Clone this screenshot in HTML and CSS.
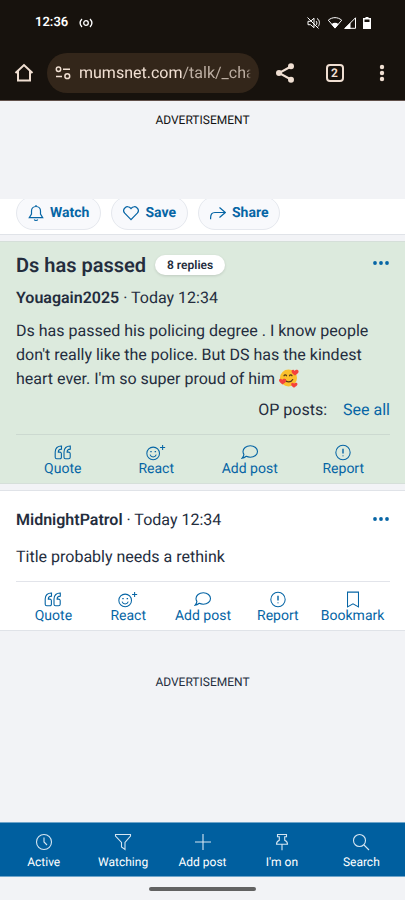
FILE: index.html
```html
<!DOCTYPE html>
<html lang="en">
<head>
<meta charset="utf-8">
<meta name="viewport" content="width=device-width, initial-scale=1">
<title>Ds has passed | Mumsnet</title>
<link rel="stylesheet" href="styles.css">
</head>
<body>
<svg class="sprite" aria-hidden="true">
  <symbol id="quote" viewBox="0 0 18 16"><path d="M7.500 1.500C3.800 1.400 1.200 3.600 1.200 7.500v5.200c0 1 .6 1.600 1.600 1.600h3c1 0 1.600-.6 1.600-1.600V9.200c0-1-.6-1.600-1.600-1.600H4.300c0-2 1.200-3 3.200-3zM16.300 1.500c-3.700-.1-6.300 2.100-6.300 6v5.200c0 1 .6 1.600 1.600 1.600h3c1 0 1.600-.6 1.600-1.600V9.200c0-1-.6-1.600-1.600-1.600h-1.500c0-2 1.200-3 3.200-3z"/></symbol>
  <symbol id="react" viewBox="0 0 22 18"><circle cx="8" cy="10" r="6.700"/><path d="M4.700 11.300c1.200 3.200 5.400 3.200 6.600 0M18 1v5.400M15.300 3.700h5.400"/><path class="dot" d="M5.700 7.500v1.200M10.300 7.500v1.200"/></symbol>
  <symbol id="comment" viewBox="0 0 18 16"><path d="M9.300 1.300c4.200 0 7.200 2.500 7.200 5.700s-3 5.700-7.200 5.700c-1.500 0-2.900-.3-4-.9-1.100.9-2.400 1.900-4.300 2 .9-1 1.800-2.300 1.900-3.900C2.300 9 2 8 2 7c0-3.200 3.100-5.700 7.300-5.700z"/></symbol>
  <symbol id="report" viewBox="0 0 18 18"><circle cx="9" cy="9" r="7.600"/><path class="dot" d="M9 5v5M9 12.300v.7"/></symbol>
  <symbol id="bookmark" viewBox="0 0 18 18"><path d="M3.200 1.200h11.600v15.600L9 13.500l-5.800 3.300z"/></symbol>
  <symbol id="dots" viewBox="0 0 18 6"><circle cx="3" cy="3" r="1.900"/><circle cx="9" cy="3" r="1.900"/><circle cx="15" cy="3" r="1.900"/></symbol>
</svg>

<header class="chrome">
  <div class="status">
    <span class="clock">12:36</span>
    <svg class="line cast" viewBox="0 0 14 12"><circle cx="7" cy="6" r="2.300"/><path d="M3 2C.6 4.500.6 7.500 3 10M11 2c2.400 2.500 2.400 5.500 0 8"/></svg>
    <svg class="signals" viewBox="0 0 66 14">
      <path class="stroke" d="M2 5.300h2.500L8 2.200v9.500L4.500 8.700H2zM10 5c1.200 1 1.200 3 0 4M11 2.500c3 1.500 3 6 1 8M1.500 1.500l11 11"/>
      <path class="stroke" d="M22.300 4.200c4-3.400 9.400-3.400 13.400 0L29 12z"/><path d="M25.500 8.200c2-1.800 5-1.800 7 0L29 12.500z"/>
      <path class="stroke" d="M39 12.300L49.500 1.800v10.500z"/><path d="M38 12.900l6.500-6.500v6.500z"/>
      <path d="M59.500 1h3v1H65v11h-8V2h2.500zM58.500 3.500V6h5V3.500z" fill-rule="evenodd"/>
    </svg>
  </div>
  <div class="toolbar">
    <button class="tool" aria-label="Home"><svg class="line" width="20" height="20" viewBox="0 0 20 20"><path d="M1.500 10L10 2l8.500 8M4 8v9.500h12V8"/></svg></button>
    <button class="address" aria-label="Address bar">
      <svg class="line" width="16" height="14" viewBox="0 0 16 14"><circle cx="3.500" cy="3.300" r="2.200"/><path d="M8 3.300h7M1 10.500h6"/><circle cx="12.300" cy="10.200" r="2.400"/></svg>
      <span class="url">mumsnet.com<span class="path">/talk/_chat</span></span>
    </button>
    <button class="tool share" aria-label="Share page"><svg width="20" height="20" viewBox="0 0 20 20"><path class="stroke" d="M16 3.500L4 10l12 6.500"/><circle cx="16" cy="3.300" r="3"/><circle cx="4" cy="10" r="3"/><circle cx="16" cy="16.700" r="3"/></svg></button>
    <button class="tool" aria-label="Tabs"><span class="tabs">2</span></button>
    <button class="tool" aria-label="Menu"><svg width="6" height="18" viewBox="0 0 6 18"><circle cx="3" cy="3" r="2.200"/><circle cx="3" cy="9" r="2.200"/><circle cx="3" cy="15" r="2.200"/></svg></button>
  </div>
</header>

<aside class="advert advert-top">ADVERTISEMENT</aside>

<main>
  <div class="thread-tools">
    <button class="pill"><svg class="icon" viewBox="0 0 16 18"><path d="M8 2.500C5 2.500 3.500 4.500 3.500 7v3L1.300 13.700h13.400L12.500 10V7c0-2.500-1.500-4.500-4.500-4.500zM8 1v1.500M6.300 15.500c.4 1.300 3 1.300 3.400 0"/></svg>Watch</button>
    <button class="pill"><svg class="icon" viewBox="1 0 16 18"><path d="M9 15.700L2.700 9.200C-.4 5.500 4.800-.2 9 4.500c4.200-4.700 9.400 1 6.300 4.700z"/></svg>Save</button>
    <button class="pill"><svg class="icon" viewBox="1 0 16 18"><path d="M1.600 15.200C1.400 10 3 8.500 6 8.500h10.300M10.500 3.500l5.800 5-5.800 5"/></svg>Share</button>
  </div>

  <article class="post op">
    <header class="row">
      <h1>Ds has passed</h1>
      <span class="replies">8 replies</span>
      <button class="more" aria-label="Post options"><svg><use href="#dots"/></svg></button>
    </header>
    <p class="byline"><b>Youagain2025</b> · Today 12:34</p>
    <p class="text">Ds has passed his policing degree . I know people don't really like the police. But DS has the kindest heart ever. I'm so super proud of him
      <svg class="emoji" role="img" aria-label="Smiling face with hearts" viewBox="0 0 20 20"><circle cx="9.500" cy="10" r="8.500" fill="#fbc02d"/><g fill="none" stroke="#573a18" stroke-linecap="round" stroke-width="1.200"><path d="M5 7.800c.5-1.300 2-1.300 2.500 0M10.500 7.800c.5-1.300 2-1.300 2.500 0M5.700 11.500c1.500 3.200 6.500 3.200 8 0"/></g><g fill="#f4423c"><path d="M16 7.500c-2-1.500-4-3-3.400-4.800.6-1.500 2.500-1.300 3 .2 1-1.700 3.700-1.700 4 .3.200 1.800-1.700 3-3.600 4.300z"/><path d="M3.500 16.500c-2-1.500-4-3-3.400-4.800.6-1.500 2.500-1.300 3 .2 1-1.700 3.700-1.700 4 .3.200 1.800-1.700 3-3.600 4.300z"/><path d="M15 19.700c-2-1.300-3.300-2.500-2.700-4.100.6-1.300 2.200-1.200 2.700.2.900-1.500 3.300-1.400 3.500.3.100 1.500-1.700 2.500-3.500 3.600z"/></g></svg></p>
    <p class="op-posts">OP posts: <a href="#all">See all</a></p>
    <div class="actions">
      <button><svg><use href="#quote"/></svg>Quote</button>
      <button><svg class="wide"><use href="#react"/></svg>React</button>
      <button><svg><use href="#comment"/></svg>Add post</button>
      <button><svg><use href="#report"/></svg>Report</button>
    </div>
  </article>

  <article class="post reply">
    <header class="row">
      <p class="byline"><b>MidnightPatrol</b> · Today 12:34</p>
      <button class="more" aria-label="Post options"><svg><use href="#dots"/></svg></button>
    </header>
    <p class="text">Title probably needs a rethink</p>
    <div class="actions">
      <button><svg><use href="#quote"/></svg>Quote</button>
      <button><svg class="wide"><use href="#react"/></svg>React</button>
      <button><svg><use href="#comment"/></svg>Add post</button>
      <button><svg><use href="#report"/></svg>Report</button>
      <button><svg><use href="#bookmark"/></svg>Bookmark</button>
    </div>
  </article>
</main>

<aside class="advert advert-bottom">ADVERTISEMENT</aside>

<nav class="tabbar">
  <a href="#active"><svg viewBox="0 0 18 18"><circle cx="9" cy="9" r="7.500"/><path d="M9 4.500V9l3 3"/></svg>Active</a>
  <a href="#watching"><svg viewBox="0 0 18 18"><path d="M1.500 1.500h15v1.500L11 9.500v7L7.500 14V9.500L1.500 3z"/></svg>Watching</a>
  <a href="#add"><svg viewBox="0 0 18 18"><path d="M9 1v16M1 9h16"/></svg>Add post</a>
  <a href="#on"><svg viewBox="0 0 18 18"><path d="M4.500 1.500h9v2.200h-1.800v3.600c1.700.8 2.800 2 2.800 3.900h-11c0-1.900 1.100-3.100 2.800-3.900V3.700H4.500zM9 11.200v6"/></svg>I'm on</a>
  <a href="#search"><svg viewBox="0 0 18 18"><circle cx="7.500" cy="7.500" r="6"/><path d="M12 12l5 5"/></svg>Search</a>
</nav>
<div class="gesture"><span></span></div>
</body>
</html>
```
FILE: styles.css
```css
* { box-sizing: border-box; }

body {
  margin: 0;
  min-height: 100vh;
  display: flex;
  flex-direction: column;
  background: #f2f3f6;
  color: #242d3d;
  font: 16px/24px Roboto, sans-serif;
  text-rendering: geometricPrecision;
}

h1, p { margin: 0; }
a { color: #0665a5; text-decoration: none; }
button { border: 0; padding: 0; background: none; color: inherit; font: inherit; text-rendering: inherit; }
b { font-weight: 600; }
svg { display: block; flex: none; }
.sprite { position: absolute; width: 0; height: 0; }

/* Browser chrome */
.chrome {
  background: #17120d;
  color: #f0dfd2;
  fill: currentColor;
  border-bottom: 1px solid #61504a;
}
.status {
  display: flex;
  align-items: center;
  height: 46px;
  padding: 0 33px 0 35px;
  color: #fff;
}
.clock { font-size: 13px; font-weight: 600; }
.line, .stroke { fill: none; stroke: currentColor; stroke-width: 2; }
.cast { width: 14px; height: 12px; margin-left: 11px; stroke-width: 1.3; }
.signals { width: 66px; height: 14px; margin-left: auto; }
.signals .stroke { stroke-width: 1; }
.toolbar {
  display: flex;
  align-items: center;
  height: 54px;
}
.tool {
  display: grid;
  place-items: center;
  width: 47px;
  height: 48px;
}
.address {
  flex: 1;
  display: flex;
  align-items: center;
  gap: 8px;
  min-width: 0;
  height: 40px;
  padding: 0 8px;
  border-radius: 20px;
  background: #33261a;
}
.address .line { stroke-width: 1.5px; }
.url {
  flex: 1;
  overflow: hidden;
  text-align: left;
  white-space: nowrap;
  mask-image: linear-gradient(to left, transparent, #000 4px);
}
.path { color: #bcaea2; }
.share { width: 52px; }
.tabs {
  width: 18px;
  height: 18px;
  border: 2px solid;
  border-radius: 4px;
  font-size: 12px;
  font-weight: 700;
  line-height: 14px;
}

/* Advert slots */
.advert {
  text-align: center;
  font-size: 12px;
  line-height: 16px;
}
.advert-top { height: 98px; padding-top: 11px; color: #111; }
.advert-bottom { flex: 1; padding-top: 43px; }

.thread-tools {
  display: flex;
  align-items: flex-end;
  gap: 10px;
  height: 36px;
  overflow: hidden;
  padding: 0 16px 4px;
  background: #fff;
  border-bottom: 1px solid #e0e3e8;
}
.pill {
  display: flex;
  align-items: center;
  gap: 6px;
  height: 34px;
  padding: 0 11px;
  border: 1px solid #e5e8ee;
  border-radius: 17px;
  background: #f8f9fc;
  color: #0665a5;
  font-size: 14px;
  font-weight: 700;
}
.icon { width: 16px; height: 18px; fill: none; stroke: currentColor; stroke-width: 1.2; }
.post {
  margin-top: 6px;
  padding: 0 15px 0 16px;
  border: solid #e0e3e8;
  border-width: 1px 0;
  background: #fff;
}
.op { background: #dceadd; border-color: #d5dfd9; padding-top: 10px; }
.reply { padding-top: 17px; }
.row { display: flex; align-items: center; }
h1 { font-size: 20px; font-weight: 600; line-height: 26px; }
.replies {
  margin-left: 9px;
  padding: 0 12px;
  border-radius: 10px;
  background: #fff;
  box-shadow: 0 1px 3px #0002;
  font-size: 12px;
  font-weight: 600;
  line-height: 20px;
}
.more { align-self: flex-start; margin-left: auto; padding: 4px 0; color: #0665a5; }
.more svg { width: 18px; height: 14px; fill: currentColor; }
.op .byline { margin-top: 8px; }
.op .text { margin-top: 9px; }
.reply .text { margin-top: 13px; }
.emoji { display: inline-block; width: 20px; height: 20px; vertical-align: -4px; }
.op-posts {
  display: flex;
  justify-content: flex-end;
  gap: 16px;
  margin-top: 7px;
}
.actions {
  display: flex;
  margin-top: 12px;
  padding: 9px 0 5px;
  border-top: 1px solid #e2e4ea;
}
.op .actions { border-color: #ccd9d0; }
.actions button {
  flex: 1 1 0;
  display: flex;
  flex-direction: column;
  align-items: center;
  color: #0665a5;
  font-size: 14px;
  line-height: 17px;
  white-space: nowrap;
}
.actions svg {
  width: 18px;
  height: 17px;
  fill: none;
  stroke: currentColor;
  stroke-width: 1.1;
}
.actions .wide { width: 22px; }
.dot { stroke-width: 1.5; }

/* Bottom navigation */
.tabbar {
  display: flex;
  padding: 10px 4px 6px;
  border: solid #6fa5ca;
  border-width: 1px 0;
  background: #005f9f;
}
.tabbar a {
  flex: 1 1 0;
  display: flex;
  flex-direction: column;
  align-items: center;
  gap: 3px;
  color: #fff;
  font-size: 12px;
  line-height: 16px;
}
.tabbar svg {
  width: 18px;
  height: 18px;
  fill: none;
  stroke: #d5e6f2;
  stroke-width: 1.1;
}
.gesture {
  display: grid;
  place-items: center;
  height: 23px;
}
.gesture span {
  width: 107px;
  height: 4px;
  border-radius: 2px;
  background: #626262;
}
```
